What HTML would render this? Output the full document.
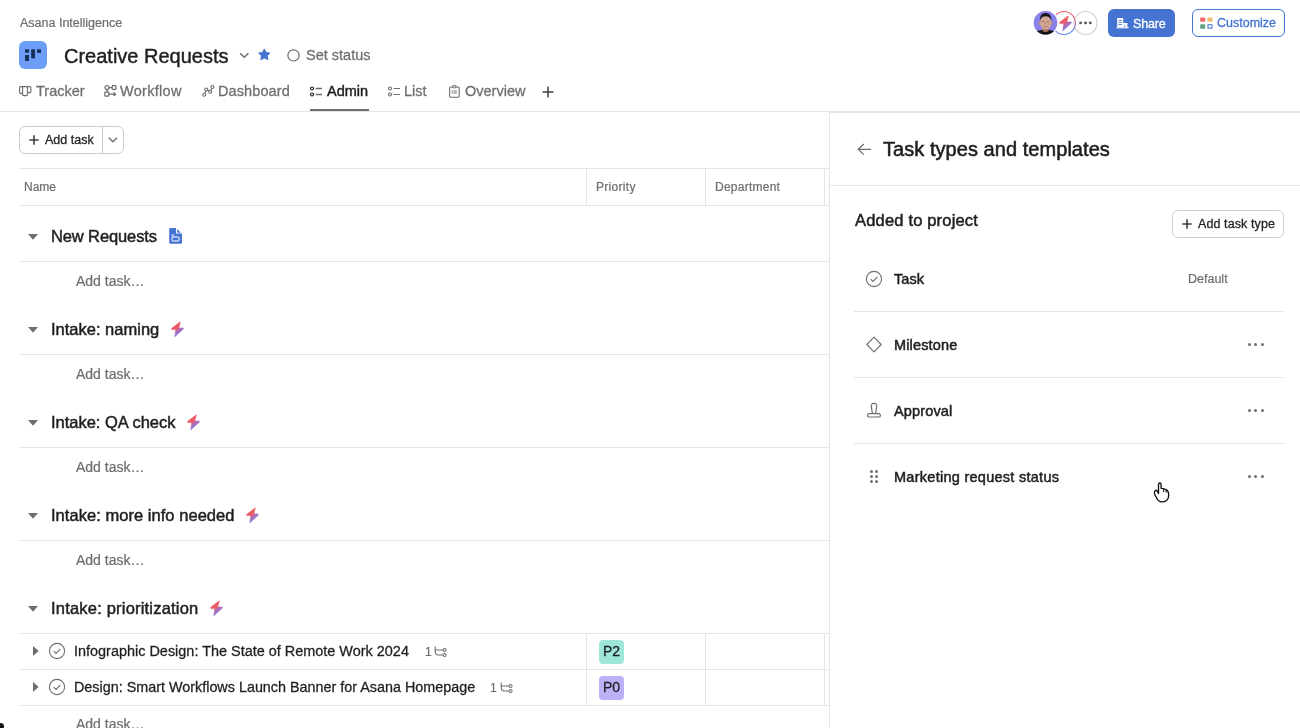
<!DOCTYPE html>
<html><head><meta charset="utf-8"><style>
*{box-sizing:border-box;margin:0;padding:0}
html,body{width:1300px;height:728px;overflow:hidden;background:#fff;font-family:"Liberation Sans",sans-serif;color:#1e1f21}
.a{position:absolute;white-space:nowrap;line-height:1;will-change:transform}
svg{position:absolute;overflow:visible}
.hl{position:absolute;height:1px;background:#e8e4e3}
.vl{position:absolute;width:1px;background:#e8e4e3}
.gray{color:#6d6e6f}
.tab{font-size:14.5px;color:#6d6e6f;-webkit-text-stroke:0.28px #6d6e6f}
.sec{font-size:16.5px;-webkit-text-stroke:0.48px #1e1f21;color:#1e1f21}
.addt{font-size:14px;color:#6d6e6f;-webkit-text-stroke:0.22px #6d6e6f}
.rt{font-size:14.5px;letter-spacing:0.15px;-webkit-text-stroke:0.5px #1e1f21;color:#1e1f21}
.dot{position:absolute;width:3px;height:3px;border-radius:50%;background:#6d6e6f}
.dd{position:absolute;width:3.3px;height:3.3px;border-radius:50%;background:#6d6e6f}
</style></head><body>
<svg width="0" height="0" style="left:0;top:0"><defs><linearGradient id="rg" x1="0.3" y1="0" x2="0.5" y2="1"><stop offset="0" stop-color="#f5535a"/><stop offset="0.45" stop-color="#d86a90"/><stop offset="0.75" stop-color="#8a76dc"/><stop offset="1" stop-color="#4d86f2"/></linearGradient><linearGradient id="lg" x1="0.25" y1="0.15" x2="0.7" y2="0.95"><stop offset="0" stop-color="#f5535a"/><stop offset="0.4" stop-color="#e45e6e"/><stop offset="0.62" stop-color="#a46fc0"/><stop offset="1" stop-color="#7a78e8"/></linearGradient></defs></svg>
<div class="a gray" style="left:19.5px;top:16.82px;font-size:12.5px;-webkit-text-stroke:0.22px #6d6e6f">Asana Intelligence</div>
<div style="position:absolute;left:19px;top:41px;width:28px;height:28px;border-radius:6px;background:#6d9ef7"></div>
<svg style="left:19px;top:41px" width="28" height="28"><g fill="#15305a"><rect x="6" y="8.3" width="4" height="3.4"/><rect x="6" y="14" width="4" height="6"/><rect x="12.2" y="8.3" width="3.8" height="9"/><rect x="18" y="8.3" width="4" height="3.6"/></g></svg>
<div class="a" style="left:64.4px;top:46.07px;font-size:20px;-webkit-text-stroke:0.42px #1e1f21">Creative Requests</div>
<svg style="left:239px;top:52px" width="11" height="7"><path d="M1.2 1.2 L5.3 5.2 L9.4 1.2" fill="none" stroke="#6d6e6f" stroke-width="1.5"/></svg>
<svg style="left:258px;top:48.3px" width="13" height="13"><path fill="#4573d2" stroke="#4573d2" stroke-width="0.9" stroke-linejoin="round" d="M6.30 0.90 L8.06 4.47 L12.01 5.05 L9.15 7.83 L9.83 11.75 L6.30 9.90 L2.77 11.75 L3.45 7.83 L0.59 5.05 L4.54 4.47Z"/></svg>
<svg style="left:287px;top:48.5px" width="13" height="13"><circle cx="6.5" cy="6.4" r="5.6" fill="none" stroke="#6d6e6f" stroke-width="1.2"/></svg>
<div class="a gray" style="left:305.6px;top:47.93px;font-size:14.5px;-webkit-text-stroke:0.28px #6d6e6f">Set status</div>
<svg style="left:19px;top:86px" width="13" height="11"><path d="M0.6 1.6 Q0.6 0.6 1.6 0.6 H10.9 Q11.9 0.6 11.9 1.6 V5.6 Q11.9 6.6 10.9 6.6 H8.4 V8.6 Q8.4 9.6 7.4 9.6 H4.6 Q3.6 9.6 3.6 8.6 V7.4 H1.6 Q0.6 7.4 0.6 6.4 Z M3.6 0.6 V7.4 M8.4 0.6 V6.6" fill="none" stroke="#6d6e6f" stroke-width="1.1"/></svg>
<div class="a tab" style="left:35.6px;top:83.53px">Tracker</div>
<svg style="left:104px;top:85px" width="13" height="12"><g fill="none" stroke="#6d6e6f" stroke-width="1.2"><circle cx="3" cy="2.6" r="2"/><rect x="8.2" y="0.6" width="3.8" height="3.8" rx="0.6"/><path d="M5 2.6 H8.2 M3 4.6 V7.2"/><rect x="0.8" y="7.2" width="4" height="4" rx="0.6"/><path d="M4.8 9.2 H11.6 M9.6 7.4 L11.6 9.2 L9.6 11"/></g></svg>
<div class="a tab" style="left:120.4px;top:83.53px;letter-spacing:0.3px">Workflow</div>
<svg style="left:202px;top:85px" width="13" height="12"><g fill="none" stroke="#6d6e6f" stroke-width="1.1"><circle cx="2.2" cy="9.7" r="1.5"/><circle cx="4.3" cy="4.5" r="1.5"/><circle cx="8.2" cy="6.8" r="1.5"/><circle cx="10.4" cy="2" r="1.5"/><path d="M2.8 8.3 L3.7 5.9 M5.6 5.3 L6.9 6.1 M8.8 5.4 L9.8 3.4"/></g></svg>
<div class="a tab" style="left:218px;top:83.53px;letter-spacing:0.1px">Dashboard</div>
<svg style="left:310px;top:85.5px" width="13" height="11"><g fill="none" stroke="#1e1f21" stroke-width="1.2"><circle cx="2" cy="2.5" r="1.5"/><circle cx="2" cy="8.5" r="1.5"/></g><g stroke="#6d6e6f" stroke-width="1.5"><path d="M5.6 2.5 H12 M5.6 8.5 H12"/></g></svg>
<div class="a tab" style="left:327.4px;top:83.53px;color:#1e1f21;-webkit-text-stroke:0.45px #1e1f21">Admin</div>
<div style="position:absolute;left:310px;top:109px;width:58.5px;height:2px;background:#6d6e6f"></div>
<svg style="left:388px;top:85.5px" width="13" height="11"><g fill="none" stroke="#6d6e6f" stroke-width="1.1"><circle cx="2" cy="2.5" r="1.5"/><circle cx="2" cy="8.5" r="1.5"/><path d="M5.6 2.5 H12 M5.6 8.5 H12"/></g></svg>
<div class="a tab" style="left:404.4px;top:83.53px">List</div>
<svg style="left:449px;top:84.5px" width="11" height="13"><g fill="none" stroke="#6d6e6f" stroke-width="1.1"><path d="M3.5 2 H1.5 Q0.6 2 0.6 3 V11.3 Q0.6 12.2 1.5 12.2 H9.3 Q10.2 12.2 10.2 11.3 V3 Q10.2 2 9.3 2 H7.3"/><ellipse cx="5.4" cy="1.8" rx="1.9" ry="1.2"/></g><g fill="#6d6e6f"><circle cx="3.3" cy="6" r="0.7"/><circle cx="3.3" cy="8" r="0.7"/><rect x="4.6" y="5.5" width="3.3" height="1"/><rect x="4.6" y="7.5" width="3.3" height="1"/></g></svg>
<div class="a tab" style="left:464.5px;top:83.53px">Overview</div>
<svg style="left:542px;top:86px" width="12" height="12"><path d="M6 0.5 V11.5 M0.5 6 H11.5" stroke="#1e1f21" stroke-width="1.5" opacity="0.85"/></svg>
<div class="hl" style="left:0;top:111px;width:1300px"></div>
<svg style="left:1072px;top:9px" width="28" height="28"><circle cx="13.5" cy="14" r="11.5" fill="#fff" stroke="#d3cfce" stroke-width="1.1"/><g fill="#58595a"><circle cx="8.6" cy="13.9" r="1.45"/><circle cx="13.5" cy="13.9" r="1.45"/><circle cx="18.3" cy="13.9" r="1.45"/></g></svg>
<svg style="left:1050px;top:9px" width="28" height="28"><circle cx="13.9" cy="14" r="11.5" fill="none" stroke="url(#rg)" stroke-width="1.1"/></svg>
<svg style="left:1053px;top:11.2px" width="24" height="24"><path d="M15.3 4.8 L6.8 11.3 L6.8 12.6 L10.8 12.6 L9.8 19.8 L18.2 12.2 L18.2 11 L13.8 11 Z" fill="url(#lg)" stroke="url(#lg)" stroke-width="0.6" stroke-linejoin="round"/></svg>
<svg style="left:1033px;top:10px" width="25" height="25"><defs><clipPath id="av"><circle cx="12.5" cy="12.8" r="11.8"/></clipPath></defs><circle cx="12.5" cy="12.8" r="13" fill="#fff"/><circle cx="12.5" cy="12.8" r="11.8" fill="#8a80ea"/><g clip-path="url(#av)"><path d="M1.5 25 Q2.5 20.5 9 20 H16 Q22.5 20.5 23.5 25 V26 H1.5Z" fill="#151313"/><path d="M9.6 17 H15.6 V21.2 Q12.6 23 9.6 21.2Z" fill="#9a6b55"/><ellipse cx="6.8" cy="13" rx="1.2" ry="1.8" fill="#c18f78"/><ellipse cx="18.4" cy="13" rx="1.2" ry="1.8" fill="#c18f78"/><ellipse cx="12.6" cy="12.9" rx="5.5" ry="6.9" fill="#d3a68f"/><path d="M6.9 11 Q6.5 3 12.6 2.9 Q18.7 3 18.3 11 Q17.6 6.4 12.6 6.2 Q7.6 6.4 6.9 11Z" fill="#1a1616"/><path d="M10.4 16.4 Q12.6 17.4 14.8 16.4" stroke="#a9706a" stroke-width="0.9" fill="none"/><g fill="#5e4038" opacity="0.55"><ellipse cx="10.3" cy="11.6" rx="1.2" ry="0.55"/><ellipse cx="14.9" cy="11.6" rx="1.2" ry="0.55"/></g><path d="M12.6 12 V14.6" stroke="#b98670" stroke-width="0.8"/></g></svg>
<div style="position:absolute;left:1107.5px;top:9px;width:67px;height:28px;border-radius:6px;background:#4573d2"></div>
<svg style="left:1116px;top:18px" width="13" height="11"><g fill="#fff"><rect x="1.2" y="0" width="6" height="9.4"/><rect x="7.2" y="5" width="4.2" height="4.4"/><rect x="0.3" y="9.2" width="12.3" height="1.1"/></g><g fill="#4573d2"><rect x="2.6" y="2" width="3.3" height="0.9"/><rect x="2.6" y="4" width="3.3" height="0.9"/><rect x="2.6" y="6" width="3.3" height="0.9"/><rect x="8.2" y="6.6" width="1.3" height="2.6" opacity="0.5"/></g></svg>
<div class="a" style="left:1133.2px;top:17.52px;font-size:12.5px;letter-spacing:-0.15px;color:#fff;-webkit-text-stroke:0.3px #fff">Share</div>
<div style="position:absolute;left:1191.5px;top:9px;width:93px;height:28px;border-radius:6px;border:1px solid #4573d2;background:#fff"></div>
<svg style="left:1200px;top:17px" width="14" height="13"><rect x="0.2" y="0.4" width="5" height="4.4" rx="0.8" fill="#f06a6a"/><rect x="7.5" y="0.4" width="5" height="4.4" rx="0.8" fill="#f1bd6c"/><rect x="0.2" y="7.2" width="5" height="4.5" rx="0.8" fill="#5da283"/><rect x="8" y="7.7" width="4" height="3.5" fill="none" stroke="#4573d2" stroke-width="1"/></svg>
<div class="a" style="left:1217px;top:17.42px;font-size:12.5px;color:#4573d2;-webkit-text-stroke:0.3px #4573d2">Customize</div>
<div style="position:absolute;left:19px;top:126px;width:104.5px;height:28px;border-radius:6px;border:1px solid #cfcbcb;background:#fff"></div>
<div class="vl" style="left:101.5px;top:127px;height:26px;background:#cfcbcb"></div>
<svg style="left:28.5px;top:134.5px" width="11" height="11"><path d="M5 0.3 V9.7 M0.3 5 H9.7" stroke="#1e1f21" stroke-width="1.6" opacity="0.85"/></svg>
<div class="a" style="left:44.7px;top:133.82px;font-size:12.5px;color:#1e1f21;-webkit-text-stroke:0.28px #1e1f21">Add task</div>
<svg style="left:107.5px;top:137px" width="10" height="6"><path d="M0.8 0.8 L4.9 4.8 L9 0.8" fill="none" stroke="#6d6e6f" stroke-width="1.4"/></svg>
<div class="hl" style="left:19px;top:168px;width:810px"></div>
<div class="hl" style="left:19px;top:205px;width:810px"></div>
<div class="vl" style="left:586px;top:168px;height:37px"></div>
<div class="vl" style="left:705px;top:168px;height:37px"></div>
<div class="vl" style="left:824px;top:168px;height:37px"></div>
<div class="a gray" style="left:23.6px;top:181.44px;font-size:12px;letter-spacing:0px;-webkit-text-stroke:0.22px #6d6e6f">Name</div>
<div class="a gray" style="left:595.6px;top:181.44px;font-size:12px;letter-spacing:0.3px;-webkit-text-stroke:0.22px #6d6e6f">Priority</div>
<div class="a gray" style="left:714.6px;top:181.44px;font-size:12px;letter-spacing:0.25px;-webkit-text-stroke:0.22px #6d6e6f">Department</div>
<svg style="left:28px;top:233.5px" width="10" height="6"><path d="M0 0 H10 L5 5.8Z" fill="#6d6e6f"/></svg>
<div class="a sec" style="left:50.7px;top:228.03px;letter-spacing:-0.12px">New Requests</div>
<svg style="left:164px;top:224px" width="24" height="24"><path d="M6.5 4 H12 V9.6 H18 V18.5 Q18 19.8 16.7 19.8 H6.5 Q5.2 19.8 5.2 18.5 V5.3 Q5.2 4 6.5 4Z" fill="#4573d2"/><path d="M13.2 5 L16.8 8.7 H13.2Z" fill="#4573d2"/><rect x="7.9" y="13" width="7.2" height="4" rx="1.6" fill="none" stroke="#c9d3f6" stroke-width="1.4"/><rect x="7.5" y="10.3" width="2.6" height="2.2" fill="#c9d3f6" opacity="0.8"/></svg>
<div class="hl" style="left:19px;top:261px;width:810px"></div>
<div class="a addt" style="left:75.8px;top:273.65px">Add task…</div>
<svg style="left:28px;top:326.5px" width="10" height="6"><path d="M0 0 H10 L5 5.8Z" fill="#6d6e6f"/></svg>
<div class="a sec" style="left:50.7px;top:321.03px;letter-spacing:0px">Intake: naming</div>
<svg style="left:164.89999999999998px;top:317px" width="24" height="24"><path d="M15.3 4.8 L6.8 11.3 L6.8 12.6 L10.8 12.6 L9.8 19.8 L18.2 12.2 L18.2 11 L13.8 11 Z" fill="url(#lg)" stroke="url(#lg)" stroke-width="0.6" stroke-linejoin="round"/></svg>
<div class="hl" style="left:19px;top:354px;width:810px"></div>
<div class="a addt" style="left:75.8px;top:366.65px">Add task…</div>
<svg style="left:28px;top:419.5px" width="10" height="6"><path d="M0 0 H10 L5 5.8Z" fill="#6d6e6f"/></svg>
<div class="a sec" style="left:50.7px;top:414.03px;letter-spacing:-0.02px">Intake: QA check</div>
<svg style="left:181.2px;top:410px" width="24" height="24"><path d="M15.3 4.8 L6.8 11.3 L6.8 12.6 L10.8 12.6 L9.8 19.8 L18.2 12.2 L18.2 11 L13.8 11 Z" fill="url(#lg)" stroke="url(#lg)" stroke-width="0.6" stroke-linejoin="round"/></svg>
<div class="hl" style="left:19px;top:447px;width:810px"></div>
<div class="a addt" style="left:75.8px;top:459.65px">Add task…</div>
<svg style="left:28px;top:512.5px" width="10" height="6"><path d="M0 0 H10 L5 5.8Z" fill="#6d6e6f"/></svg>
<div class="a sec" style="left:50.7px;top:507.03px;letter-spacing:0.04px">Intake: more info needed</div>
<svg style="left:239.79999999999998px;top:503px" width="24" height="24"><path d="M15.3 4.8 L6.8 11.3 L6.8 12.6 L10.8 12.6 L9.8 19.8 L18.2 12.2 L18.2 11 L13.8 11 Z" fill="url(#lg)" stroke="url(#lg)" stroke-width="0.6" stroke-linejoin="round"/></svg>
<div class="hl" style="left:19px;top:540px;width:810px"></div>
<div class="a addt" style="left:75.8px;top:552.65px">Add task…</div>
<svg style="left:28px;top:605.5px" width="10" height="6"><path d="M0 0 H10 L5 5.8Z" fill="#6d6e6f"/></svg>
<div class="a sec" style="left:50.7px;top:600.03px;letter-spacing:0.2px">Intake: prioritization</div>
<svg style="left:204.0px;top:596px" width="24" height="24"><path d="M15.3 4.8 L6.8 11.3 L6.8 12.6 L10.8 12.6 L9.8 19.8 L18.2 12.2 L18.2 11 L13.8 11 Z" fill="url(#lg)" stroke="url(#lg)" stroke-width="0.6" stroke-linejoin="round"/></svg>
<div class="hl" style="left:19px;top:633px;width:810px"></div>
<svg style="left:32.8px;top:645.8px" width="6" height="10"><path d="M0 0 V10 L5.6 5Z" fill="#6d6e6f"/></svg>
<svg style="left:48px;top:642.3px" width="18" height="18"><circle cx="9" cy="9" r="7.6" fill="none" stroke="#6d6e6f" stroke-width="1.1"/><path d="M5.7 9.2 L8 11.4 L12.4 6.9" fill="none" stroke="#6d6e6f" stroke-width="1.1"/></svg>
<div class="a" style="left:74.4px;top:644.07px;font-size:14.45px;color:#1e1f21;-webkit-text-stroke:0.28px #1e1f21">Infographic Design: The State of Remote Work 2024</div>
<div class="a gray" style="left:424.5px;top:645.64px;font-size:12px;-webkit-text-stroke:0.2px #6d6e6f">1</div>
<svg style="left:434px;top:646px" width="14" height="12"><g fill="none" stroke="#6d6e6f" stroke-width="1.1"><path d="M1.2 0.5 V5.5 Q1.2 9 4.5 9 H9.2 M1.2 4 H9.2"/><circle cx="10.6" cy="4" r="1.45"/><circle cx="10.6" cy="9" r="1.45"/></g></svg>
<div style="position:absolute;left:599px;top:639.5px;width:25px;height:24px;border-radius:4px;background:#9ee7d8"></div>
<div class="a" style="left:602.5px;top:644.15px;font-size:14px;color:#1e1f21;-webkit-text-stroke:0.28px #1e1f21">P2</div>
<div class="hl" style="left:19px;top:669px;width:810px"></div>
<div class="vl" style="left:586px;top:633px;height:36px"></div>
<div class="vl" style="left:705px;top:633px;height:36px"></div>
<div class="vl" style="left:824px;top:633px;height:36px"></div>
<svg style="left:32.8px;top:681.8px" width="6" height="10"><path d="M0 0 V10 L5.6 5Z" fill="#6d6e6f"/></svg>
<svg style="left:48px;top:678.3px" width="18" height="18"><circle cx="9" cy="9" r="7.6" fill="none" stroke="#6d6e6f" stroke-width="1.1"/><path d="M5.7 9.2 L8 11.4 L12.4 6.9" fill="none" stroke="#6d6e6f" stroke-width="1.1"/></svg>
<div class="a" style="left:74.4px;top:680.14px;font-size:14.36px;color:#1e1f21;-webkit-text-stroke:0.28px #1e1f21">Design: Smart Workflows Launch Banner for Asana Homepage</div>
<div class="a gray" style="left:489.5px;top:681.64px;font-size:12px;-webkit-text-stroke:0.2px #6d6e6f">1</div>
<svg style="left:499.5px;top:682px" width="14" height="12"><g fill="none" stroke="#6d6e6f" stroke-width="1.1"><path d="M1.2 0.5 V5.5 Q1.2 9 4.5 9 H9.2 M1.2 4 H9.2"/><circle cx="10.6" cy="4" r="1.45"/><circle cx="10.6" cy="9" r="1.45"/></g></svg>
<div style="position:absolute;left:599px;top:675.5px;width:25px;height:24px;border-radius:4px;background:#bcb1f7"></div>
<div class="a" style="left:602.5px;top:680.15px;font-size:14px;color:#1e1f21;-webkit-text-stroke:0.28px #1e1f21">P0</div>
<div class="hl" style="left:19px;top:705px;width:810px"></div>
<div class="vl" style="left:586px;top:669px;height:36px"></div>
<div class="vl" style="left:705px;top:669px;height:36px"></div>
<div class="vl" style="left:824px;top:669px;height:36px"></div>
<div class="a addt" style="left:75.8px;top:717.15px">Add task…</div>
<div style="position:absolute;left:-3px;top:723px;width:7px;height:7px;border-radius:50%;background:#111"></div>
<div style="position:absolute;left:829px;top:112px;width:471px;height:616px;background:#fff;border-left:1px solid #e8e4e3;border-top:1px solid #e8e4e3"></div>
<svg style="left:856.5px;top:143px" width="15" height="13"><path d="M14 6.3 H1.5 M6.8 1 L1.3 6.3 L6.8 11.6" fill="none" stroke="#6d6e6f" stroke-width="1.3"/></svg>
<div class="a" style="left:883.3px;top:139.47px;font-size:20px;letter-spacing:0.05px;color:#1e1f21;-webkit-text-stroke:0.55px #1e1f21">Task types and templates</div>
<div class="hl" style="left:830px;top:185px;width:470px"></div>
<div class="a" style="left:854.7px;top:212.23px;font-size:16.5px;letter-spacing:0.18px;color:#1e1f21;-webkit-text-stroke:0.5px #1e1f21">Added to project</div>
<div style="position:absolute;left:1172px;top:210px;width:112px;height:28px;border-radius:6px;border:1px solid #cfcbcb;background:#fff"></div>
<svg style="left:1181.5px;top:218.5px" width="11" height="11"><path d="M5 0.3 V9.7 M0.3 5 H9.7" stroke="#1e1f21" stroke-width="1.6" opacity="0.85"/></svg>
<div class="a" style="left:1197.8px;top:218.22px;font-size:12.5px;letter-spacing:0.1px;color:#1e1f21;-webkit-text-stroke:0.28px #1e1f21">Add task type</div>
<div class="a rt" style="left:894px;top:271.53px;letter-spacing:0.1px">Task</div>
<div class="hl" style="left:854px;top:311px;width:430px"></div>
<div class="a rt" style="left:894px;top:337.53px;letter-spacing:0.15px">Milestone</div>
<div class="hl" style="left:854px;top:377px;width:430px"></div>
<div class="dot" style="left:1247.9px;top:343.0px"></div>
<div class="dot" style="left:1254.4px;top:343.0px"></div>
<div class="dot" style="left:1260.9px;top:343.0px"></div>
<div class="a rt" style="left:894px;top:403.53px;letter-spacing:0.15px">Approval</div>
<div class="hl" style="left:854px;top:443px;width:430px"></div>
<div class="dot" style="left:1247.9px;top:409.0px"></div>
<div class="dot" style="left:1254.4px;top:409.0px"></div>
<div class="dot" style="left:1260.9px;top:409.0px"></div>
<div class="a rt" style="left:894px;top:469.53px;letter-spacing:0.27px">Marketing request status</div>
<div class="dot" style="left:1247.9px;top:475.0px"></div>
<div class="dot" style="left:1254.4px;top:475.0px"></div>
<div class="dot" style="left:1260.9px;top:475.0px"></div>
<div class="a gray" style="left:1187.8px;top:272.52px;font-size:12.5px;-webkit-text-stroke:0.22px #6d6e6f">Default</div>
<svg style="left:865px;top:269.5px" width="18" height="18"><circle cx="9" cy="9" r="7.6" fill="none" stroke="#6d6e6f" stroke-width="1.1"/><path d="M5.7 9.2 L8 11.4 L12.4 6.9" fill="none" stroke="#6d6e6f" stroke-width="1.1"/></svg>
<svg style="left:865px;top:335.5px" width="18" height="18"><path d="M9 1.2 L16.2 8.5 L9 15.8 L1.8 8.5Z" fill="none" stroke="#6d6e6f" stroke-width="1.1" stroke-linejoin="round"/></svg>
<svg style="left:860px;top:398px" width="28" height="26"><g fill="none" stroke="#6d6e6f" stroke-width="1.15"><path d="M12.4 15.4 L11.4 9.2 Q10.6 5.3 14 5.3 Q17.4 5.3 16.6 9.2 L15.6 15.4"/><rect x="7.6" y="15.6" width="12.8" height="3.4" rx="1.6"/></g></svg>
<div class="dd" style="left:869.85px;top:469.65000000000003px"></div>
<div class="dd" style="left:869.85px;top:474.75px"></div>
<div class="dd" style="left:869.85px;top:479.85px"></div>
<div class="dd" style="left:874.95px;top:469.65000000000003px"></div>
<div class="dd" style="left:874.95px;top:474.75px"></div>
<div class="dd" style="left:874.95px;top:479.85px"></div>
<svg style="left:1148px;top:476px" width="28" height="30"><path d="M10.5 17.5 V8.5 Q10.5 7 11.8 7 Q13.1 7 13.1 8.5 V12.3 Q16 12.3 18.5 13.8 Q20.7 15.2 20.7 19 Q20.7 25.5 14.5 25.8 Q10.5 26 8.8 22.5 L6.5 17.8 Q6 15.2 7.5 14.3 Q9 13.8 10.5 17.5 Z" fill="#fff" stroke="#111" stroke-width="1.35" stroke-linejoin="round"/><path d="M15.6 12.6 V16 M18.2 13.8 V16.6" stroke="#111" stroke-width="1.1"/></svg>
</body></html>
